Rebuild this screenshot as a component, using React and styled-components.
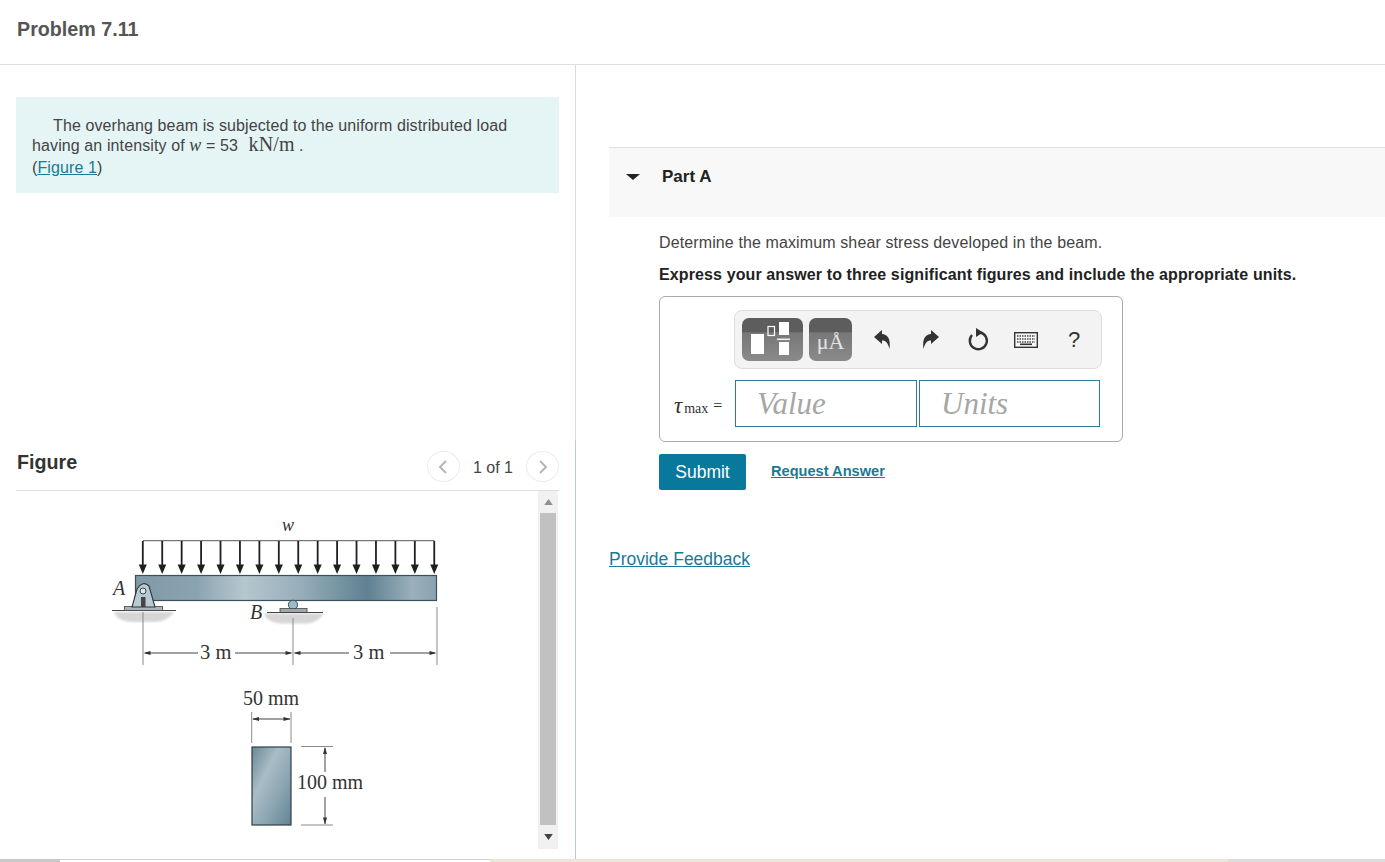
import styled, { createGlobalStyle } from 'styled-components';

const GlobalStyle = createGlobalStyle`
  html, body {
    margin: 0;
    padding: 0;
    height: 100%;
    overflow: hidden;
    background: #fff;
  }
  body {
    font-family: "Liberation Sans", Arial, sans-serif;
    font-size: 16px;
    color: #444;
  }
`;

const Page = styled.div`
  display: flex;
  flex-direction: column;
  width: 1385px;
  height: 862px;
  overflow: hidden;
`;
const TopBar = styled.header`
  display: flex;
  align-items: center;
  flex: none;
  height: 59px;
  padding: 0 0 5px 17px;
  border-bottom: 1px solid #dfdfdf;
`;
const Title = styled.h1`
  margin: 0;
  font-size: 19.7px;
  font-weight: bold;
  color: #555;
`;
const Columns = styled.div`
  display: flex;
  flex: 1;
  min-height: 0;
`;
const LeftPane = styled.section`
  flex: none;
  width: 576px;
  padding: 32px 16px 0;
  box-sizing: border-box;
  border-right: 1px solid;
  border-image: linear-gradient(#dcdcdc 0, #dcdcdc 375px, #bccad8 376px) 1;
`;
const IntroBox = styled.div`
  background: #e5f4f5;
  height: 96px;
  padding: 19px 16px 0;
  box-sizing: border-box;
  line-height: 20px;
  letter-spacing: 0.11px;
  color: #444;
`;
const FigureRef = styled.div`
  margin-top: 2px;
`;
const Indent = styled.span`
  display: inline-block;
  width: 21px;
`;
const MathVar = styled.i`
  font-family: "Liberation Serif", serif;
  font-size: 18px;
  line-height: 0;
`;
const MathUnit = styled.span`
  font-family: "Liberation Serif", serif;
  font-size: 20px;
  line-height: 0;
  margin-left: 6px;
`;
const TextLink = styled.a`
  color: #1a7a96;
  text-decoration: underline;
  font-weight: ${(props) => (props.$bold ? 'bold' : 'normal')};
  font-size: ${(props) => props.$size || 16}px;
`;
const RequestLink = styled(TextLink)`
  margin-bottom: 3px;
`;
const FigureHead = styled.div`
  display: flex;
  align-items: center;
  justify-content: space-between;
  height: 44px;
  margin-top: 253px;
  border-bottom: 1px solid #ddd;
`;
const FigureTitle = styled.h2`
  margin: 0 0 12px 1px;
  font-size: 19.7px;
  font-weight: bold;
  color: #333;
`;
const Pager = styled.div`
  display: flex;
  align-items: center;
  gap: 13px;
  color: #444;
`;
const PagerButton = styled.span`
  display: flex;
  align-items: center;
  justify-content: center;
  width: 33px;
  height: 31px;
  margin-bottom: 3px;
  border: 1px solid #ececec;
  border-radius: 50%;
  box-sizing: border-box;
`;
const FigureView = styled.div`
  display: flex;
  height: 358px;
`;
const Drawing = styled.svg`
  display: block;
  flex: none;
`;
const ScrollBar = styled.div`
  display: flex;
  flex-direction: column;
  align-items: center;
  width: 20px;
  margin-left: 1px;
  background: #f1f1f1;
`;
const ScrollUp = styled.div`
  display: flex;
  align-items: center;
  justify-content: center;
  flex: none;
  height: 22px;
`;
const ScrollDown = styled.div`
  display: flex;
  align-items: center;
  justify-content: center;
  flex: 1;
`;
const ScrollThumb = styled.div`
  width: 16px;
  height: 312px;
  background: #c1c1c1;
`;
const RightPane = styled.main`
  flex: 1;
  min-width: 0;
  padding: 82px 0 0 33px;
`;
const PartHeader = styled.div`
  display: flex;
  align-items: center;
  gap: 22px;
  height: 70px;
  padding: 0 0 12px 17px;
  box-sizing: border-box;
  border-top: 1px solid #e0e0e0;
  background: #f8f8f8;
`;
const Caret = styled.span`
  width: 0;
  height: 0;
  border-left: 7px solid transparent;
  border-right: 7px solid transparent;
  border-top: 6px solid #222;
`;
const PartTitle = styled.h3`
  margin: 0;
  font-size: 17px;
  font-weight: bold;
  color: #222;
`;
const PartBody = styled.div`
  padding: 16px 0 0 50px;
`;
const Prompt = styled.p`
  margin: 0 0 ${(props) => (props.$strong ? 12 : 13)}px;
  line-height: 19px;
  letter-spacing: 0.115px;
  color: ${(props) => (props.$strong ? '#222' : '#444')};
  font-weight: ${(props) => (props.$strong ? 'bold' : 'normal')};
`;
const AnswerBox = styled.div`
  width: 464px;
  height: 146px;
  padding: 13px 0 0 14px;
  box-sizing: border-box;
  border: 1px solid #aaa;
  border-radius: 6px;
`;
const Toolbar = styled.div`
  display: flex;
  align-items: center;
  width: 368px;
  height: 59px;
  margin-left: 60px;
  padding-left: 7px;
  box-sizing: border-box;
  background: #f3f3f3;
  border: 1px solid #ddd;
  border-radius: 8px;
`;
const ToolGroup = styled.div`
  display: flex;
  width: ${(props) => props.$width}px;
  height: 43px;
  margin-right: ${(props) => props.$gap}px;
  padding-top: ${(props) => props.$dropText || 0}px;
  box-sizing: border-box;
  align-items: center;
  justify-content: center;
  flex: none;
  border-radius: 7px;
  color: #e4e4e4;
  font-family: "Liberation Serif", serif;
  font-size: 22px;
  background: linear-gradient(#5d5d5d 0, #5d5d5d 33%, #777 34%, #8a8a8a 100%);
`;
const ToolIcon = styled.span`
  display: flex;
  align-items: center;
  justify-content: center;
  width: 48px;
  flex: none;
  color: #333;
  font-size: 22px;
`;
const InputRow = styled.div`
  display: flex;
  align-items: center;
  margin-top: 11px;
`;
const VarLabel = styled.span`
  display: flex;
  align-items: baseline;
  width: 61px;
  flex: none;
  padding-top: 4px;
  box-sizing: border-box;
  font-family: "Liberation Serif", serif;
  color: #333;
`;
const Tau = styled.i`
  font-size: 23px;
  line-height: 1;
  margin-right: 2px;
`;
const Sub = styled.span`
  font-size: 14px;
`;
const EqualSign = styled.span`
  margin-left: 5px;
  font-size: 16px;
  transform: translateY(-2px);
`;
const AnswerField = styled.div`
  display: flex;
  align-items: center;
  width: ${(props) => props.$width}px;
  height: 47px;
  margin-right: 2px;
  padding-left: 21px;
  box-sizing: border-box;
  border: 1px solid #2b7d95;
  font-family: "Liberation Serif", serif;
  font-style: italic;
  font-size: 31px;
  color: #a6a6a6;
`;
const Actions = styled.div`
  display: flex;
  align-items: center;
  gap: 25px;
  margin-top: 12px;
`;
const SubmitButton = styled.button`
  width: 87px;
  height: 36px;
  padding: 0;
  border: 0;
  border-radius: 2px;
  background: #08799d;
  color: #fff;
  font-family: "Liberation Sans", Arial, sans-serif;
  font-size: 17.5px;
`;
const Feedback = styled.div`
  margin-top: 59px;
`;
const BottomStrip = styled.div`
  display: flex;
  flex: none;
  height: 3px;
`;
const StripPart = styled.div`
  width: ${(props) => (props.$width ? `${props.$width}px` : 'auto')};
  flex: ${(props) => (props.$width ? 'none' : 1)};
  box-sizing: border-box;
  background: ${(props) => props.$color};
  border-top: 1px solid ${(props) => props.$line || props.$color};
`;
const FlippableSvg = styled.svg`
  transform: ${(props) => (props.$flip ? 'scaleX(-1)' : 'none')};
`;

const arrowXs = Array.from({ length: 16 }, (v, i) => 142.8 + i * 19.43);

const Arrow = ({ x }) => (
  <g>
    <line x1={x} y1="541" x2={x} y2="566" stroke="#1f1f1f" strokeWidth="1.8" />
    <polygon points={`${x - 4},564.5 ${x + 4},564.5 ${x},574`} fill="#1f1f1f" />
  </g>
);

const DimTip = ({ x, y, dir }) => (
  <polygon points={`${x},${y} ${x + dir * 7},${y - 2} ${x + dir * 7},${y + 2}`} fill="#333" />
);

const Ground = ({ width }) => (
  <path
    d={`M0 0 h${width} q-6 9 -${width * 0.3} 10 h-${width * 0.4} q-${width * 0.25} -1 -${width * 0.3} -10 z`}
    fill="#d6d6d6"
    filter="url(#soft)"
  />
);

const BeamDrawing = () => (
  <Drawing width="521" height="358" viewBox="16 491 521 358">
    <defs>
      <filter id="soft">
        <feGaussianBlur stdDeviation="1.2" />
      </filter>
      <linearGradient id="beamFill" x1="0" x2="1" y1="0" y2="0">
        <stop offset="0" stopColor="#7e99a7" />
        <stop offset="0.2" stopColor="#8aa3b0" />
        <stop offset="0.36" stopColor="#b5c7ce" />
        <stop offset="0.55" stopColor="#96aeb9" />
        <stop offset="0.77" stopColor="#5f8192" />
        <stop offset="0.92" stopColor="#9ab0ba" />
        <stop offset="1" stopColor="#8aa2ae" />
      </linearGradient>
      <linearGradient id="sectionFill" x1="0" x2="1" y1="0" y2="1">
        <stop offset="0" stopColor="#6a8897" />
        <stop offset="0.35" stopColor="#a9bdc6" />
        <stop offset="0.7" stopColor="#86a1ae" />
        <stop offset="1" stopColor="#628292" />
      </linearGradient>
    </defs>

    <text x="282" y="531" fontFamily="Liberation Serif" fontStyle="italic" fontSize="18" fill="#333">w</text>
    <line x1="142.8" y1="540.7" x2="434.3" y2="540.7" stroke="#555" strokeWidth="1" />
    {arrowXs.map((x) => (
      <Arrow key={x} x={x} />
    ))}
    <rect x="135.5" y="575.5" width="301" height="25" fill="url(#beamFill)" stroke="#3d4f5a" strokeWidth="1.2" />

    <g transform="translate(114 612)">
      <Ground width={60} />
    </g>
    <line x1="112" y1="610.5" x2="176" y2="610.5" stroke="#444" strokeWidth="1.2" />
    <rect x="124.5" y="606.5" width="38" height="4" fill="#a9b4ba" stroke="#444" strokeWidth="0.8" />
    <path d="M132 607 L137 589 Q143 580 149 586 L155 607 Z" fill="#b7cbd4" stroke="#333" strokeWidth="1.1" />
    <circle cx="143" cy="591" r="3" fill="#dfe6e9" stroke="#444" strokeWidth="1" />
    <rect x="141" y="597" width="4.5" height="10" fill="#444" />
    <text x="113" y="595" fontFamily="Liberation Serif" fontStyle="italic" fontSize="20" fill="#333">A</text>

    <g transform="translate(264 613.5)">
      <Ground width={60} />
    </g>
    <circle cx="293" cy="604.8" r="4.6" fill="#9dbac8" stroke="#3d4f5a" strokeWidth="1" />
    <rect x="280" y="608.5" width="27" height="4" fill="#a0a8ac" stroke="#444" strokeWidth="0.8" />
    <line x1="267" y1="612.5" x2="323" y2="612.5" stroke="#444" strokeWidth="1.2" />
    <text x="250" y="619" fontFamily="Liberation Serif" fontStyle="italic" fontSize="20" fill="#333">B</text>

    <g stroke="#8a8a8a" strokeWidth="1">
      <line x1="143" y1="612" x2="143" y2="665" />
      <line x1="293" y1="618" x2="293" y2="665" />
      <line x1="437" y1="607" x2="437" y2="665" />
    </g>
    <g stroke="#444" strokeWidth="1">
      <line x1="145" y1="653" x2="198" y2="653" />
      <line x1="235" y1="653" x2="291" y2="653" />
      <line x1="295" y1="653" x2="349" y2="653" />
      <line x1="390" y1="653" x2="435" y2="653" />
    </g>
    <DimTip x={143.5} y={653} dir={1} />
    <DimTip x={292.5} y={653} dir={-1} />
    <DimTip x={293.5} y={653} dir={1} />
    <DimTip x={436.5} y={653} dir={-1} />
    <text x="200" y="659" fontFamily="Liberation Serif" fontSize="20.5" fill="#333">3 m</text>
    <text x="353" y="659" fontFamily="Liberation Serif" fontSize="20.5" fill="#333">3 m</text>

    <text x="243" y="705" fontFamily="Liberation Serif" fontSize="20" fill="#333">50 mm</text>
    <g stroke="#8a8a8a" strokeWidth="1">
      <line x1="251.7" y1="712" x2="251.7" y2="743" />
      <line x1="291" y1="712" x2="291" y2="743" />
      <line x1="301" y1="746.5" x2="333" y2="746.5" />
      <line x1="301" y1="825" x2="333" y2="825" />
    </g>
    <line x1="253" y1="719" x2="290" y2="719" stroke="#444" strokeWidth="1" />
    <DimTip x={252} y={719} dir={1} />
    <DimTip x={290.5} y={719} dir={-1} />
    <rect x="252" y="747" width="39" height="78" fill="url(#sectionFill)" stroke="#2f3e47" strokeWidth="1.2" />
    <line x1="325" y1="748" x2="325" y2="772" stroke="#444" strokeWidth="1" />
    <line x1="325" y1="797" x2="325" y2="824" stroke="#444" strokeWidth="1" />
    <polygon points="325,747 323,754 327,754" fill="#333" />
    <polygon points="325,824.5 323,817.5 327,817.5" fill="#333" />
    <text x="297" y="789" fontFamily="Liberation Serif" fontSize="20" fill="#333">100 mm</text>
  </Drawing>
);

const Chevron = ({ flip }) => (
  <svg width="12" height="16" viewBox="0 0 12 16">
    <path
      d={flip ? 'M3 2 L9 8 L3 14' : 'M9 2 L3 8 L9 14'}
      fill="none"
      stroke="#b5b5b5"
      strokeWidth="2"
    />
  </svg>
);

const TemplateIcon = () => (
  <svg width="61" height="43" viewBox="0 0 61 43">
    <rect x="9" y="16" width="13" height="20" fill="#fff" />
    <rect x="26" y="8.5" width="6.5" height="9" fill="none" stroke="#fff" strokeWidth="1.2" />
    <rect x="37" y="4" width="10" height="13" fill="#fff" />
    <rect x="35" y="20.5" width="13" height="1.6" fill="#eee" />
    <rect x="37" y="24" width="10" height="13" fill="#fff" />
  </svg>
);

const UndoIcon = ({ flip }) => (
  <FlippableSvg $flip={flip} width="19" height="22" viewBox="0 0 19 22">
    <path d="M1 8 L9 1 V5 C14 5.5 18 9 16.5 20 C15 14 13 11.5 9 11.5 V15 Z" fill="#333" />
  </FlippableSvg>
);

const ResetIcon = () => (
  <svg width="24" height="26" viewBox="0 0 24 26">
    <path d="M14.5 5.5 A8.5 8.5 0 1 1 6 8" fill="none" stroke="#333" strokeWidth="2.4" />
    <polygon points="10,1 17,5.5 10,10" fill="#333" />
  </svg>
);

const KeyboardIcon = () => (
  <svg width="24" height="16" viewBox="0 0 24 16">
    <rect x="0.7" y="0.7" width="22.6" height="14.6" fill="#f8f8f8" stroke="#333" strokeWidth="1.4" />
    <path d="M3 4 H21 M3 7 H21 M3 10 H21" stroke="#444" strokeWidth="1.6" strokeDasharray="1.5 1" />
    <rect x="6" y="11.5" width="12" height="1.6" fill="#333" />
  </svg>
);

export default function App() {
  return (
    <Page>
      <GlobalStyle />
      <TopBar>
        <Title>Problem 7.11</Title>
      </TopBar>
      <Columns>
        <LeftPane>
          <IntroBox>
            <Indent />
            The overhang beam is subjected to the uniform distributed load
            <br />
            having an intensity of <MathVar>w</MathVar> = 53 <MathUnit>kN/m</MathUnit> .
            <FigureRef>
              (<TextLink>Figure 1</TextLink>)
            </FigureRef>
          </IntroBox>
          <FigureHead>
            <FigureTitle>Figure</FigureTitle>
            <Pager>
              <PagerButton>
                <Chevron />
              </PagerButton>
              <span>1 of 1</span>
              <PagerButton>
                <Chevron flip />
              </PagerButton>
            </Pager>
          </FigureHead>
          <FigureView>
            <BeamDrawing />
            <ScrollBar>
              <ScrollUp>
                <svg width="9" height="6" viewBox="0 0 10 7">
                  <polygon points="0,7 10,7 5,0" fill="#8f8f8f" />
                </svg>
              </ScrollUp>
              <ScrollThumb />
              <ScrollDown>
                <svg width="9" height="6" viewBox="0 0 10 7">
                  <polygon points="0,0 10,0 5,7" fill="#444" />
                </svg>
              </ScrollDown>
            </ScrollBar>
          </FigureView>
        </LeftPane>
        <RightPane>
          <PartHeader>
            <Caret />
            <PartTitle>Part A</PartTitle>
          </PartHeader>
          <PartBody>
            <Prompt>Determine the maximum shear stress developed in the beam.</Prompt>
            <Prompt $strong>Express your answer to three significant figures and include the appropriate units.</Prompt>
            <AnswerBox>
              <Toolbar>
                <ToolGroup $width={61} $gap={6}>
                  <TemplateIcon />
                </ToolGroup>
                <ToolGroup $width={43} $gap={6} $dropText={4}>μÅ</ToolGroup>
                <ToolIcon>
                  <UndoIcon />
                </ToolIcon>
                <ToolIcon>
                  <UndoIcon flip />
                </ToolIcon>
                <ToolIcon>
                  <ResetIcon />
                </ToolIcon>
                <ToolIcon>
                  <KeyboardIcon />
                </ToolIcon>
                <ToolIcon>?</ToolIcon>
              </Toolbar>
              <InputRow>
                <VarLabel>
                  <Tau>τ</Tau>
                  <Sub>max</Sub>
                  <EqualSign>=</EqualSign>
                </VarLabel>
                <AnswerField $width={182}>Value</AnswerField>
                <AnswerField $width={181}>Units</AnswerField>
              </InputRow>
            </AnswerBox>
            <Actions>
              <SubmitButton>Submit</SubmitButton>
              <RequestLink $bold $size={14.6}>Request Answer</RequestLink>
            </Actions>
          </PartBody>
          <Feedback>
            <TextLink $size={17.5}>Provide Feedback</TextLink>
          </Feedback>
        </RightPane>
      </Columns>
      <BottomStrip>
        <StripPart $width={60} $color="#c8c8c8" />
        <StripPart $width={430} $color="#fff" $line="#d0d0d0" />
        <StripPart $width={738} $color="#ece5dc" />
        <StripPart $color="#dcdcdc" />
      </BottomStrip>
    </Page>
  );
}
